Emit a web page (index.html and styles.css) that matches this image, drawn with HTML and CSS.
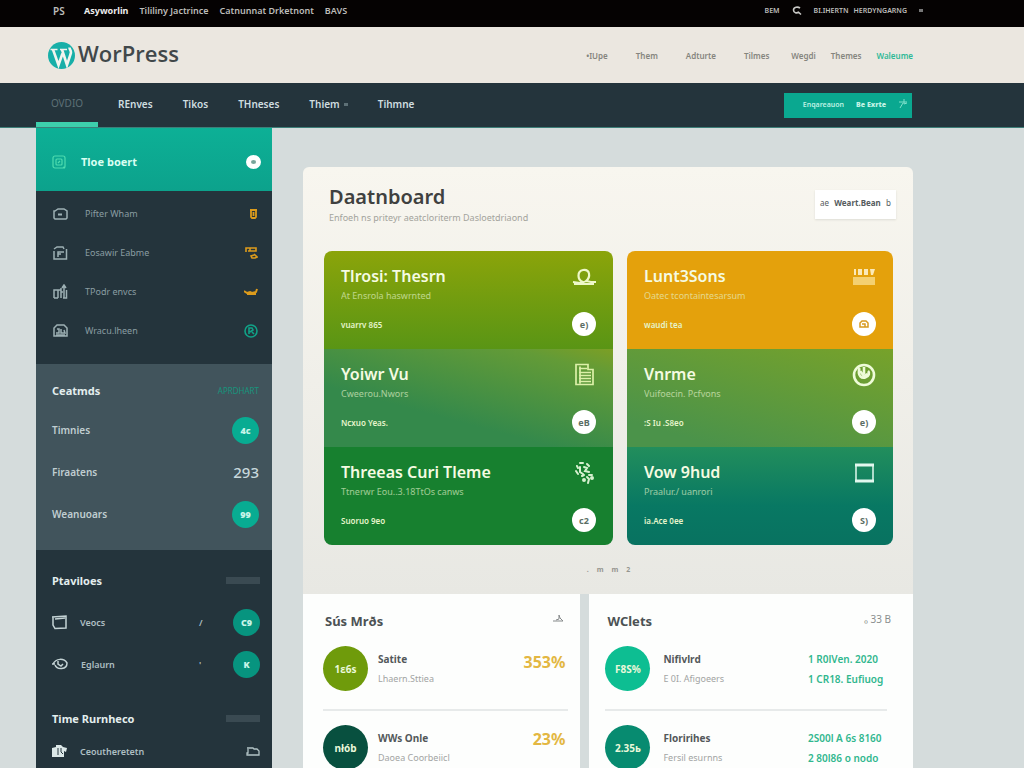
FILE: index.html
```html
<!DOCTYPE html>
<html lang="en">
<head>
<meta charset="utf-8">
<meta name="viewport" content="width=device-width, initial-scale=1">
<title>WorPress Dashboard</title>
<link rel="stylesheet" href="styles.css">
</head>
<body>
<div class="topbar">
  <nav class="topbar-links" aria-label="Site">
    <a href="#" class="mark">PS</a>
    <a href="#" class="strong">Asyworlin</a>
    <a href="#">Tililiny Jactrince</a>
    <a href="#">Catnunnat Drketnont</a>
    <a href="#">BAVS</a>
  </nav>
  <div class="topbar-tools">
    <a href="#">BEM</a>
    <button class="icon-button" aria-label="Search"><svg width="10" height="10" viewBox="0 0 10 10" fill="none" stroke="#c9c9c6" stroke-width="1.600"><path d="M8 2.200C6 .4 1.500 1 1.500 4S5 7.400 6.500 6.200L9 8.500"/></svg></button>
    <a href="#">BI.IHERTN</a>
    <a href="#" class="account">HERDYNGARNG</a>
    <span class="dot"></span>
  </div>
</div>
<header class="brandbar">
  <a href="#" class="brand">
    <svg width="27" height="27" viewBox="0 0 27 27"><circle cx="13.500" cy="13.500" r="13.500" fill="#18afa8"/><path d="M2.500 7.500h7M12 7.500h7" fill="none" stroke="#f2f4ee" stroke-width="1.500"/><path d="M5 7.500l5.500 15.500 4-11.500M14 7.500l5 15.500 3.800-11.500c.8-3-1.300-3.600-1.300-6" fill="none" stroke="#f2f4ee" stroke-width="2.600"/></svg>
    <span>WorPress</span>
  </a>
  <nav class="brand-nav" aria-label="Sections">
    <div class="brand-group wide"><a href="#">•IUpe</a><a href="#">Them</a><a href="#">Adturte</a><a href="#">Tilmes</a></div>
    <div class="brand-group"><a href="#">Wegdi</a><a href="#">Themes</a><a href="#" class="current">Waleume</a></div>
  </nav>
</header>
<div class="menubar">
  <nav class="menu" aria-label="Main">
    <a href="#" class="selected">OVDIO</a>
    <a href="#">REnves</a>
    <a href="#">Tikos</a>
    <a href="#">THneses</a>
    <a href="#">Thiem <i class="more"></i></a>
    <a href="#">Tihmne</a>
  </nav>
  <button class="cta"><span>Enqareauon</span><b>Be Exrte</b><svg width="10" height="12" viewBox="0 0 10 12" fill="none" stroke="#7fe0cb"><path d="M1 4h8M6 1v5l3-1M5 5L2 10"/></svg></button>
</div>
<div class="layout">
  <aside class="sidebar">
    <a href="#" class="side-head">
      <svg width="14" height="14" viewBox="0 0 14 14" fill="none" stroke="#4fdcaf" stroke-width="1.200"><rect x="1" y="1" width="12" height="12" rx="2"/><rect x="4" y="4" width="6" height="6" rx="1"/><path d="M6 8l2-2M11 12l2 1"/></svg>
      <span>Tloe boert</span>
      <i class="toggle"></i>
    </a>
    <nav class="side-menu" aria-label="Dashboard">
      <a href="#"><svg width="15" height="14" viewBox="0 0 15 14" fill="none" stroke="#9db0b4" stroke-width="1.500"><path d="M2 4l3-2h6l3 2v7l-1 1H2l-1-1V4z"/><path d="M5 7.500h4" stroke-width="2"/></svg><span>Pifter Wham</span><svg width="9" height="12" viewBox="0 0 9 12" fill="none" stroke="#dc9b1c" stroke-width="1.800"><path d="M1 2h7M2 2v7l1 1h3l1-1V2M4.500 4v4"/></svg></a>
      <a href="#"><svg width="15" height="14" viewBox="0 0 15 14" fill="none" stroke="#9db0b4" stroke-width="1.500"><path d="M1 5v8h12.500V3M1 3l3-2h6l1 2M5 11V6h6M5 8h3"/></svg><span>Eosawir Eabme</span><svg width="13" height="13" viewBox="0 0 13 13" fill="none" stroke="#dc9b1c" stroke-width="1.600"><path d="M1 6V2h10v3H5V2M3 5h4M9 8l3 3-2 1H7l-1-2 3-1"/></svg></a>
      <a href="#"><svg width="15" height="15" viewBox="0 0 15 15" fill="none" stroke="#9db0b4" stroke-width="1.500"><path d="M1 14V6h4v8M1 14h4M8 14V4M5 6h3M8 8h2M11 2v12M9 4l2-3 2 3M13.500 6v8H10"/></svg><span>TPodr envcs</span><svg width="14" height="8" viewBox="0 0 14 8" fill="none" stroke="#dc9b1c" stroke-width="2"><path d="M0 3l3 2 3-1 2 1 4-1 1-3M3 6h9"/></svg></a>
      <a href="#"><svg width="15" height="13" viewBox="0 0 15 13" fill="none" stroke="#9db0b4" stroke-width="1.500"><path d="M1 12V4l3-3h7l3 3v8zM3 9h3V5H4M8 5v4h4l-1-3M3 11h9"/></svg><span>Wracu.lheen</span><svg width="14" height="14" viewBox="0 0 14 14" fill="none" stroke="#11a287" stroke-width="1.600"><circle cx="7" cy="7" r="6"/><path d="M5 10V4h3l1 2-3 2M8 8l2 2"/></svg></a>
    </nav>
    <section class="side-stats">
      <div class="side-title"><h2>Ceatmds</h2><a href="#">APRDHART</a></div>
      <div class="stat"><span>Timnies</span><b class="pill">4c</b></div>
      <div class="stat"><span>Firaatens</span><strong>293</strong></div>
      <div class="stat"><span>Weanuoars</span><b class="pill">99</b></div>
    </section>
    <section class="side-block">
      <div class="side-title"><h2>Ptaviloes</h2><i class="bar"></i></div>
      <a href="#" class="entry"><svg width="15" height="15" viewBox="0 0 15 15" fill="none" stroke="#c4d3d5" stroke-width="1.500"><path d="M0 2l14-1v12l-11 .5L1 10V2M3 4l10-1"/></svg><span>Veocs</span><em>/</em><b class="pill dark">C9</b></a>
      <a href="#" class="entry"><svg width="16" height="12" viewBox="0 0 16 12" fill="none" stroke="#c4d3d5" stroke-width="1.500"><path d="M1 6C4 0 12 0 15 5c0 7-10 7-12 2M6 3v3l3 2 2-2M0 6h3"/></svg><span>Eglaurn</span><em>'</em><b class="pill dark">K</b></a>
    </section>
    <section class="side-block last">
      <div class="side-title"><h2>Time Rurnheco</h2><i class="bar"></i></div>
      <a href="#" class="entry"><svg width="15" height="13" viewBox="0 0 15 13"><path d="M0 3l4-1V0h5l2 2 4 1-1 4-2-1v6H0z" fill="#dce8e8"/><path d="M6 3v7M9 3v4l2 2" stroke="#24343c" fill="none"/></svg><span>Ceoutheretetn</span><svg width="14" height="9" viewBox="0 0 14 9" fill="none" stroke="#b2c3c6" stroke-width="1.300"><path d="M1 1h6l1 1h3l2 2v4H1V6h1V2"/></svg></a>
    </section>
  </aside>
  <main class="content">
    <section class="dashboard">
      <div class="dash-head">
        <div>
          <h1>Daatnboard</h1>
          <p>Enfoeh ns priteyr aeatcloriterm Dasloetdriaond</p>
        </div>
        <button class="filter"><small>ae</small><b>Weart.Bean</b><small>b</small></button>
      </div>
      <div class="tiles">
        <div class="stack">
          <article class="tile lime">
            <div class="tile-text"><h3>Tlrosi: Thesrn</h3><p>At Ensrola haswrnted</p><a href="#">vuarrv 865</a></div>
            <div class="tile-side"><svg width="25" height="18" viewBox="0 0 25 18" fill="none" stroke="#eef8c8" stroke-width="2.200"><path d="M1 14l7 1 3-1c-6-2-6-11 0-12 7-1 8 7 3 11l5 1h5M2 16h20"/></svg><button class="round">e)</button></div>
          </article>
          <article class="tile sage">
            <div class="tile-text"><h3>Yoiwr Vu</h3><p>Cweerou.Nwors</p><a href="#">Ncxuo Yeas.</a></div>
            <div class="tile-side"><svg width="19" height="23" viewBox="0 0 19 23" fill="none" stroke="#dcf0a8" stroke-width="1.700"><path d="M1 1h12v5h5v15H1zM4 5h8M4 9h12M4 12h12M4 15h12M4 18h12M5 3v17"/></svg><button class="round">eB</button></div>
          </article>
          <article class="tile forest">
            <div class="tile-text"><h3>Threeas Curi Tleme</h3><p>Ttnerwr Eou..3.18TtOs canws</p><a href="#">Suoruo 9eo</a></div>
            <div class="tile-side"><svg width="19" height="22" viewBox="0 0 19 22" fill="none" stroke="#d6f0cf" stroke-width="2" stroke-linecap="round"><path d="M2 4l1 2M5 1h3M12 2l2 2M1 9l2 3M5 5v5l3 2M9 5l3 1-2 3 4 1M7 14l2-1"/><circle cx="9" cy="18" r="1"/><circle cx="17" cy="16" r="1"/><path d="M12 15l2 2-1 4M14 13h3"/></svg><button class="round">c2</button></div>
          </article>
        </div>
        <div class="stack">
          <article class="tile amber">
            <div class="tile-text"><h3>Lunt3Sons</h3><p>Oatec tcontaintesarsum</p><a href="#">waudi tea</a></div>
            <div class="tile-side"><svg width="23" height="18" viewBox="0 0 23 18"><path d="M1 1h2v6H1zm4 0h4v6H5zm6 0h4v6h-4zm6 0h5l-2 6h-2z" fill="#fbe9b8"/><path d="M0 9h22v8H0z" fill="#f4d071"/></svg><button class="round" aria-label="Open"><svg width="10" height="8" viewBox="0 0 10 8" fill="none" stroke="#d89a20" stroke-width="1.500"><path d="M1 7V3l2-2h4l2 2v4zM3 4h3v3"/></svg></button></div>
          </article>
          <article class="tile olive">
            <div class="tile-text"><h3>Vnrme</h3><p>Vuifoecin. Pcfvons</p><a href="#">:S Iu .S8eo</a></div>
            <div class="tile-side"><svg width="24" height="24" viewBox="0 0 24 24" fill="none" stroke="#eefbd8" stroke-width="2.600"><circle cx="12" cy="12" r="10"/><path d="M7.500 5C5 13 10 16 14 14c3-1 4-4 2-6M12 4v7" /><path d="M8 8l4 5 4-2" /></svg><button class="round">e)</button></div>
          </article>
          <article class="tile teal">
            <div class="tile-text"><h3>Vow 9hud</h3><p>Praalur./ uanrori</p><a href="#">ia.Ace 0ee</a></div>
            <div class="tile-side"><svg width="21" height="20" viewBox="0 0 21 20" fill="none" stroke="#e2f8ee"><path d="M2 2v16M19 2v16" stroke-width="1.500"/><path d="M1 2h19M1 18h19" stroke-width="3"/></svg><button class="round">S)</button></div>
          </article>
        </div>
      </div>
      <nav class="pages" aria-label="Pages"><a href="#">.</a><a href="#">m</a><a href="#">m</a><a href="#">2</a></nav>
    </section>
    <div class="panels">
      <section class="panel">
        <div class="panel-head"><h2>Sús Mrðs</h2><svg width="11" height="8" viewBox="0 0 11 8" fill="none" stroke="#85898a"><path d="M0 7h10L7 4 6 1v4L3 6"/></svg></div>
        <div class="record"><b class="disc green">1ɛ6s</b><div><h4>Satite</h4><p>Lhaern.Sttiea</p></div><strong class="gold">353%</strong></div>
        <div class="record"><b class="disc pine">nłób</b><div><h4>WWs Onle</h4><p>Daoea Coorbeiicl</p></div><strong class="gold">23%</strong></div>
      </section>
      <section class="panel">
        <div class="panel-head"><h2>WClets</h2><span>₀ 33 B</span></div>
        <div class="record"><b class="disc mint">F8S%</b><div><h4>Nifivlrd</h4><p>E 0I. Afigoeers</p></div><div class="figures"><span>1 R0lVen. 2020</span><span>1 CR18. Eufiuog</span></div></div>
        <div class="record"><b class="disc jade">2.35ь</b><div><h4>Floririhes</h4><p>Fersil esurnns</p></div><div class="figures"><span>2S00l A 6s 8160</span><span>2 80l86 o nodo</span></div></div>
      </section>
    </div>
  </main>
</div>
</body>
</html>
```
FILE: styles.css
```css
* { box-sizing: border-box; }
body {
  margin: 0;
  display: flex;
  flex-direction: column;
  min-height: 100vh;
  background: #d5dcdc;
  font-family: "Noto Sans", sans-serif;
  font-size: 10px;
  color: #3d4447;
}
h1, h2, h3, h4, p { margin: 0; }
a { color: inherit; text-decoration: none; }
button { border: 0; padding: 0; font-family: inherit; cursor: pointer; }
svg { display: block; flex: none; }
i, em { font-style: normal; }

.topbar {
  flex: none;
  display: flex;
  justify-content: space-between;
  align-items: center;
  height: 27px;
  padding: 0 101px 6px 53px;
  background: #050202;
  color: #bdbdba;
  font-size: 9px;
  font-weight: 600;
}
.topbar-links { display: flex; align-items: center; gap: 11px; }
.topbar-links .mark { width: 20px; font-size: 10px; }
.topbar-links .strong { color: #eeeeee; font-weight: 700; }
.topbar-tools { display: flex; align-items: center; gap: 12px; font-size: 7px; }
.account { margin-left: -7px; }
.icon-button { background: none; }
.dot { width: 4px; height: 3px; background: #777777; }

.brandbar {
  flex: none;
  display: flex;
  justify-content: space-between;
  align-items: center;
  height: 56px;
  padding: 0 111px 0 48px;
  background: #ebe7e0;
}
.brand { display: flex; align-items: center; gap: 3px; }
.brand span {
  padding-bottom: 4px;
  font-family: "Open Sans", sans-serif;
  font-size: 22px;
  font-weight: 600;
  color: #41484a;
}
.brand-nav { display: flex; gap: 22px; color: #85857e; font-size: 8px; font-weight: 600; }
.brand-group { display: flex; gap: 15px; }
.brand-group.wide { gap: 28px; }
.current { color: #2eb997; font-weight: 600; }

.menubar {
  flex: none;
  display: flex;
  justify-content: space-between;
  height: 45px;
  padding: 0 112px 0 36px;
  background: #24343c;
  border-bottom: 1px solid #3d7f79;
}
.menu { display: flex; gap: 30px; color: #d0dee0; font-size: 10px; font-weight: 600; }
.menu a { display: flex; align-items: center; gap: 4px; padding-bottom: 2px; }
.menu .selected {
  justify-content: center;
  width: 62px;
  margin-right: -10px;
  padding-top: 3px;
  border-bottom: 5px solid #3dcfac;
  color: #5d7076;
  font-weight: 400;
}
.more { width: 4px; height: 3px; background: #5d7076; }
.cta {
  display: flex;
  align-items: center;
  align-self: center;
  justify-content: flex-end;
  gap: 12px;
  width: 128px;
  height: 25px;
  padding: 0 4px 2px 0;
  background: #0aa890;
  color: #bff2e4;
  font-size: 7px;
  font-weight: 600;
}

.layout {
  flex: 1;
  display: grid;
  grid-template-columns: 236px 1fr;
  gap: 31px;
  padding: 0 111px 0 36px;
}

.sidebar { background: #24343c; color: #aebfc3; }
.side-head {
  display: flex;
  align-items: center;
  height: 63px;
  padding: 4px 11px 0 16px;
  background: linear-gradient(#0db096, #0ca28c);
  color: #d9fff2;
  font-size: 11px;
  font-weight: 700;
}
.side-head span { flex: 1; padding-left: 15px; }
.toggle { width: 15px; height: 14px; border: 5px solid #ffffff; border-radius: 50%; background: #78a59b; }
.side-menu { padding: 3px 14px 14px 17px; }
.side-menu a { display: flex; align-items: center; height: 39px; color: #8a9da2; font-size: 9px; }
.side-menu span { flex: 1; padding-left: 17px; }
.side-title { display: flex; justify-content: space-between; align-items: center; height: 24px; }
.side-title h2 { color: #e3eeee; font-size: 11px; font-weight: 700; }
.side-title a { color: #17947d; font-size: 8px; }
.side-stats { padding: 14px 13px 15px 16px; background: #41545c; }
.side-stats .side-title { margin-bottom: 7px; }
.stat { display: flex; align-items: center; justify-content: space-between; height: 42px; color: #c0ced1; font-weight: 600; }
.stat strong { color: #c8d8dc; font-size: 15px; font-weight: 500; }
.pill {
  display: flex;
  align-items: center;
  justify-content: center;
  width: 27px;
  height: 27px;
  border-radius: 50%;
  background: #08ac92;
  color: #c8f5e9;
  font-size: 9px;
}
.pill.dark { background: #07947f; }
.side-block { padding: 18px 12px 21px 16px; }
.side-block .side-title { margin-bottom: 9px; }
.side-block.last { padding-top: 0; }
.side-block.last .side-title { margin-bottom: 0; }
.bar { width: 34px; height: 7px; background: #3a4a52; }
.entry { display: flex; align-items: center; height: 42px; font-size: 9px; font-weight: 600; }
.entry span { flex: 1; padding-left: 13px; }
.entry em { width: 34px; }

.content { min-width: 0; padding-top: 39px; }
.dashboard {
  padding: 17px 20px 0 21px;
  border-radius: 6px 6px 0 0;
  background: linear-gradient(#f8f6ef, #e8e8e3);
}
.dash-head { display: flex; justify-content: space-between; height: 67px; padding: 0 0 0 5px; }
.dash-head h1 { font-size: 20px; line-height: 26px; font-weight: 600; color: #3f4140; }
.dash-head p { color: #a3a39c; font-size: 9px; line-height: 16px; font-weight: 400; }
.filter {
  display: flex;
  align-items: center;
  justify-content: space-between;
  width: 81px;
  height: 29px;
  margin: 6px -3px 0 0;
  padding: 0 5px 4px;
  background: #ffffff;
  box-shadow: 0 1px 2px #dddcd5;
  color: #555b5d;
  font-size: 8px;
}
.filter small { font-size: 8px; }
.tiles { display: grid; grid-template-columns: 289fr 266fr; gap: 14px; }
.stack { overflow: hidden; border-radius: 8px; }
.tile { display: flex; justify-content: space-between; height: 98px; padding: 14px 17px 0; color: #e6f5cc; }
.tile h3 { font-size: 16px; line-height: 22px; font-weight: 600; color: #f5fbe2; }
.tile p { font-size: 9px; line-height: 18px; opacity: .65; }
.tile a { display: block; margin-top: 12px; font-size: 8px; line-height: 16px; font-weight: 600; }
.tile-side { display: flex; flex-direction: column; align-items: center; width: 24px; }
.tile-side > svg { height: 24px; }
.lime { background: linear-gradient(#8ba40a, #599515); }
.sage { background: linear-gradient(15deg, #34894b 35%, #639b37 85%, #7c9f25); }
.forest { background: #17802f; }
.amber { background: #e4a10c; }
.olive { background: linear-gradient(15deg, #4b934a 15%, #77a22a); }
.teal { background: linear-gradient(#228e5c, #087863 60%, #087260); }
.round {
  display: flex;
  align-items: center;
  justify-content: center;
  width: 24px;
  height: 24px;
  margin-top: 23px;
  border-radius: 50%;
  background: #ffffff;
  color: #5b6e65;
  font-size: 9px;
  font-weight: 700;
}
.pages { display: flex; justify-content: center; gap: 8px; height: 49px; padding-top: 20px; color: #95958f; font-size: 7px; font-weight: 700; }
.panels { display: grid; grid-template-columns: 277fr 323fr; gap: 9px; }
.panel { padding: 14px 12px 0 20px; background: #fdfefd; }
.panel:last-child { padding: 14px 26px 0 16px; }
.panel-head { display: flex; justify-content: space-between; align-items: center; height: 26px; padding: 0 4px 0 2px; }
.panel-head h2 { font-size: 13px; font-weight: 700; color: #4c5254; }
.panel-head svg { margin-bottom: 6px; }
.panel-head span { color: #8a8e8e; margin: 0 -8px 4px 0; }
.record { display: flex; align-items: center; gap: 10px; height: 75px; padding-bottom: 6px; }
.record + .record { border-top: 2px solid #e7eaea; padding-bottom: 0; }
.record > div:nth-child(2) { flex: 1; }
.panel:last-child .disc { margin-right: 3px; }
.disc {
  display: flex;
  flex: none;
  align-items: center;
  justify-content: center;
  width: 45px;
  height: 45px;
  border-radius: 50%;
  color: #eaf8da;
  font-size: 10px;
}
.green { background: #6f9b0b; }
.pine { background: #08503f; }
.mint { background: #0dbe92; }
.jade { background: #078b70; }
.record h4 { font-size: 10px; line-height: 20px; font-weight: 700; color: #53585a; }
.record p { font-size: 9px; line-height: 20px; color: #a2a4a3; font-weight: 400; }
.gold { align-self: flex-start; padding: 16px 3px 0 0; color: #e3b742; font-size: 16px; line-height: 24px; }
.figures { display: flex; flex-direction: column; width: 79px; color: #30b78e; font-size: 10px; line-height: 20px; font-weight: 600; white-space: nowrap; }
```
